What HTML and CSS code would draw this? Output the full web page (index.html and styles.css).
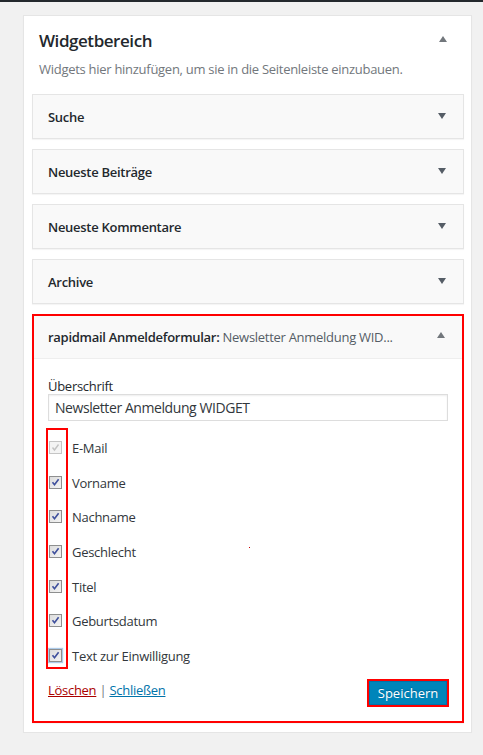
FILE: index.html
```html
<!DOCTYPE html>
<html lang="de">
<head>
<meta charset="utf-8">
<title>Widgetbereich</title>
<link rel="stylesheet" href="styles.css">
</head>
<body>
<div class="topbar"></div>
<div class="sidebar">
  <div class="sidebar-head">
    <h2 class="sidebar-title">Widgetbereich</h2>
    <span class="arrow arrow-up"></span>
  </div>
  <p class="sidebar-desc">Widgets hier hinzufügen, um sie in die Seitenleiste einzubauen.</p>
  <div class="widgets">
    <div class="widget">
      <div class="widget-top"><span class="widget-title">Suche</span><span class="arrow arrow-down"></span></div>
    </div>
    <div class="widget">
      <div class="widget-top"><span class="widget-title">Neueste Beiträge</span><span class="arrow arrow-down"></span></div>
    </div>
    <div class="widget">
      <div class="widget-top"><span class="widget-title">Neueste Kommentare</span><span class="arrow arrow-down"></span></div>
    </div>
    <div class="widget">
      <div class="widget-top"><span class="widget-title">Archive</span><span class="arrow arrow-down"></span></div>
    </div>
    <div class="widget widget-open">
      <div class="widget-top open-top"><span class="widget-title">rapidmail Anmeldeformular:<span class="in-widget-title"> Newsletter Anmeldung WID...</span></span><span class="arrow arrow-up"></span></div>
      <div class="widget-inside">
        <label class="field-label" for="title">Überschrift</label>
        <input class="text-input" id="title" type="text" value="Newsletter Anmeldung WIDGET">
        <div class="check-list">
          <div class="check-row"><span class="cb cb-disabled"><svg viewBox="0 0 11 11" width="11" height="11"><path d="M2.5 5.5 L4.5 8 L8.5 2.5" fill="none" stroke="#c3c3c3" stroke-width="1.4"/></svg></span><span class="check-label">E-Mail</span></div>
          <div class="check-row"><span class="cb"><svg viewBox="0 0 11 11" width="11" height="11"><path d="M2.5 5.3 L4.5 7.8 L8.6 2.3" fill="none" stroke="#3e4f9c" stroke-width="1.6"/></svg></span><span class="check-label">Vorname</span></div>
          <div class="check-row"><span class="cb"><svg viewBox="0 0 11 11" width="11" height="11"><path d="M2.5 5.3 L4.5 7.8 L8.6 2.3" fill="none" stroke="#3e4f9c" stroke-width="1.6"/></svg></span><span class="check-label">Nachname</span></div>
          <div class="check-row"><span class="cb"><svg viewBox="0 0 11 11" width="11" height="11"><path d="M2.5 5.3 L4.5 7.8 L8.6 2.3" fill="none" stroke="#3e4f9c" stroke-width="1.6"/></svg></span><span class="check-label">Geschlecht</span></div>
          <div class="check-row"><span class="cb"><svg viewBox="0 0 11 11" width="11" height="11"><path d="M2.5 5.3 L4.5 7.8 L8.6 2.3" fill="none" stroke="#3e4f9c" stroke-width="1.6"/></svg></span><span class="check-label">Titel</span></div>
          <div class="check-row"><span class="cb"><svg viewBox="0 0 11 11" width="11" height="11"><path d="M2.5 5.3 L4.5 7.8 L8.6 2.3" fill="none" stroke="#3e4f9c" stroke-width="1.6"/></svg></span><span class="check-label">Geburtsdatum</span></div>
          <div class="check-row"><span class="cb cb-focus"><svg viewBox="0 0 11 11" width="11" height="11"><path d="M2.5 5.3 L4.5 7.8 L8.6 2.3" fill="none" stroke="#3e4f9c" stroke-width="1.6"/></svg></span><span class="check-label">Text zur Einwilligung</span></div>
          <span class="highlight-box"></span>
          <span class="stray-dot"></span>
        </div>
        <div class="widget-control">
          <div class="control-links"><a class="link-delete" href="#">Löschen</a> <span class="sep">|</span> <a class="link-close" href="#">Schließen</a></div>
          <div class="save-outline"><button class="btn-save" type="button">Speichern</button></div>
        </div>
      </div>
    </div>
  </div>
</div>
</body>
</html>
```

FILE: styles.css
```css
html, body {
  margin: 0;
  padding: 0;
}
body {
  background: #f1f1f1;
  font-family: "Open Sans", "Noto Sans", sans-serif;
  font-size: 13px;
  letter-spacing: -0.28px;
  color: #23282d;
}
.topbar {
  height: 2px;
  background: #23282d;
}
.sidebar {
  box-sizing: border-box;
  width: 449px;
  margin: 13px 0 0 23px;
  background: #fff;
  border: 1px solid #e5e5e5;
  box-shadow: 0 1px 1px rgba(0,0,0,.04);
  padding: 0 7px 9px 8px;
}
.sidebar-head {
  display: flex;
  justify-content: space-between;
  align-items: flex-start;
  padding: 13px 17px 0 7px;
}
.sidebar-title {
  margin: 0;
  font-size: 17px;
  line-height: 24px;
  font-weight: 600;
  letter-spacing: -0.45px;
  color: #23282d;
}
.sidebar-head .arrow-up {
  margin-top: 7px;
}
.sidebar-desc {
  margin: 7px 0 16px 7px;
  font-size: 13px;
  line-height: 18px;
  color: #72777c;
}
.widgets {
  display: flex;
  flex-direction: column;
  gap: 10px;
}
.widget {
  background: #f9f9f9;
  border: 1px solid #e5e5e5;
  box-shadow: 0 1px 1px rgba(0,0,0,.04);
}
.widget-top {
  height: 43px;
  display: flex;
  align-items: center;
  justify-content: space-between;
  padding: 0 17px 0 15px;
}
.widget-title {
  font-weight: 600;
  font-size: 13px;
  line-height: 43px;
  padding-top: 1px;
  color: #23282d;
  white-space: nowrap;
}
.in-widget-title {
  font-weight: 400;
  color: #555d66;
}
.arrow {
  width: 0;
  height: 0;
  border-left: 4.5px solid transparent;
  border-right: 4.5px solid transparent;
  flex: none;
}
.arrow-down {
  border-top: 6px solid #555d66;
  margin-top: -2px;
}
.arrow-up {
  border-bottom: 6px solid #72777c;
}
.widget-open {
  border: 2px solid #ff0000;
}
.open-top {
  height: 42px;
  border-bottom: 1px solid #eee;
  padding: 0 17px 0 14px;
}
.open-top .widget-title {
  line-height: 42px;
  padding-top: 0;
}
.open-top .arrow-up {
  margin-top: -4px;
}
.widget-inside {
  background: #fff;
  padding: 17px 14px 14px 14px;
}
.field-label {
  display: block;
  font-size: 13px;
  line-height: 18px;
  margin-top: 1px;
  margin-bottom: -1px;
  color: #23282d;
}
.text-input {
  display: block;
  box-sizing: border-box;
  width: 100%;
  height: 27px;
  margin: 0;
  padding: 0 6px;
  border: 1px solid #ddd;
  box-shadow: inset 0 1px 2px rgba(0,0,0,.07);
  font-family: "Open Sans", "Noto Sans", sans-serif;
  font-size: 14px;
  letter-spacing: -0.42px;
  color: #32373c;
  background: #fff;
  outline: none;
}
.check-list {
  position: relative;
  margin-top: 7px;
  padding-top: 2px;
}
.check-row {
  height: 34.7px;
  display: flex;
  align-items: flex-start;
}
.cb {
  box-sizing: border-box;
  width: 13px;
  height: 13px;
  margin: 11px 10px 0 1px;
  border: 1px solid #8e8f8f;
  background: linear-gradient(135deg, #dcdcdc 0%, #f4f4f4 100%);
  display: flex;
  align-items: center;
  justify-content: center;
  flex: none;
}
.cb svg {
  display: block;
}
.cb-disabled {
  border-color: #c5c5c5;
  background: #f4f4f4;
}
.cb-focus {
  box-shadow: 0 0 1px 1px rgba(120,170,220,.6);
}
.check-label {
  font-size: 13px;
  line-height: 18px;
  margin-top: 9px;
  color: #32373c;
}
.highlight-box {
  position: absolute;
  left: -2px;
  top: 0;
  width: 22px;
  height: 241px;
  box-sizing: border-box;
  border: 2px solid #ff0000;
}
.stray-dot {
  position: absolute;
  left: 201px;
  top: 119px;
  width: 1px;
  height: 1px;
  background: #c00;
}
.widget-control {
  margin-top: 6px;
  display: flex;
  justify-content: space-between;
  align-items: flex-start;
}
.control-links {
  font-size: 13px;
  line-height: 18px;
  padding-top: 2px;
  color: #72777c;
}
.link-delete {
  color: #a00;
  text-decoration: underline;
}
.link-close {
  color: #0073aa;
  text-decoration: underline;
}
.save-outline {
  border: 2px solid #ff0000;
  margin-right: -1px;
}
.btn-save {
  display: block;
  box-sizing: border-box;
  width: 78px;
  height: 24px;
  margin: 0;
  padding: 0;
  background: #0085ba;
  border: 1px solid #0073aa;
  color: #fff;
  font-family: "Open Sans", "Noto Sans", sans-serif;
  font-size: 13px;
  letter-spacing: 0;
  line-height: 20px;
  text-shadow: 0 -1px 1px #006799;
}
```
